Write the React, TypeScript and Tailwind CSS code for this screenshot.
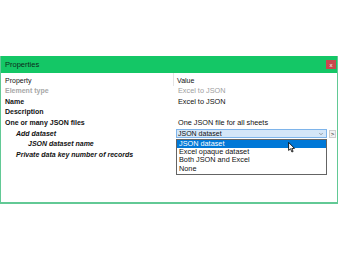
import { ChevronDown } from "lucide-react";

type Row = {
	label: string;
	labelClass: string;
	value?: string;
	valueClass?: string;
	select?: boolean;
};

const rows: Row[] = [
	{ label: "Element type", labelClass: "pl-[4px] font-bold text-[#a8a8a8]", value: "Excel to JSON", valueClass: "text-[#a0a0a0]" },
	{ label: "Name", labelClass: "pl-[4px] font-bold", value: "Excel to JSON" },
	{ label: "Description", labelClass: "pl-[4px] font-bold" },
	{ label: "One or many JSON files", labelClass: "pl-[4px] font-bold", value: "One JSON file for all sheets" },
	{ label: "Add dataset", labelClass: "pl-[15px] font-bold italic", select: true },
	{ label: "JSON dataset name", labelClass: "pl-[27px] font-bold italic" },
	{ label: "Private data key number of records", labelClass: "pl-[15px] font-bold italic" },
];

const options = ["JSON dataset", "Excel opaque dataset", "Both JSON and Excel", "None"];

function Cursor() {
	return (
		<svg width="8" height="11" viewBox="0 0 9 13" className="absolute left-[288px] top-[142px]">
			<path d="M0.5 0.5 L0.5 10 L2.8 8 L4.4 11.8 L5.8 11.2 L4.3 7.6 L7.5 7.6 Z" fill="#fff" stroke="#000" strokeWidth="1" strokeLinejoin="round" />
		</svg>
	);
}

export default function App() {
	return (
		<div className="relative h-[260px] w-[340px] overflow-hidden bg-white font-['Liberation_Sans',Arial,sans-serif] text-[7px] text-[#111]">
			<div className="h-[56px]" />
			{/* Window */}
			<div className="flex h-[148px] w-[338px] flex-col border-x-[1.5px] border-b-[2px] border-[#62c995]">
				{/* Title bar */}
				<div className="flex h-[17px] items-center justify-between bg-[#14c766] pl-[4px] pr-[1px]">
					<span className="text-[7.5px] text-[#0c2a1a]">Properties</span>
					<div className="flex h-[9px] w-[10px] items-center justify-center bg-[#c9484e] text-[6px] leading-none text-white">
						x
					</div>
				</div>

				{/* Grid */}
				<div className="flex flex-col">
					<div className="flex h-[13px] items-end">
						<div className="w-[172px] pl-[4px]">Property</div>
						<div className="h-full w-px bg-[#e4e4e4]" />
						<div className="pl-[3px]">Value</div>
					</div>
					{rows.map((r) => (
						<div key={r.label} className="flex h-[10.67px] items-center">
							<div className={`w-[173px] whitespace-nowrap ${r.labelClass}`}>{r.label}</div>
							{r.select ? (
								<div className="flex items-center gap-[2px] pl-[2px]">
									<div className="flex h-[9px] w-[151px] items-center justify-between border border-[#7eb4ea] bg-[#d4e6f8] pl-[1px] pr-[2px]">
										<span>JSON dataset</span>
										<ChevronDown size={6} strokeWidth={2} className="text-[#555]" />
									</div>
									<div className="flex h-[8px] w-[7px] items-center justify-center border border-[#cfcfcf] bg-[#f2f2f2] text-[6px] leading-none">
										&gt;
									</div>
								</div>
							) : (
								<div className={`pl-[4px] text-[7.3px] ${r.valueClass ?? ""}`}>{r.value}</div>
							)}
						</div>
					))}
				</div>
			</div>

			{/* Dropdown list */}
			<div className="absolute left-[176px] top-[139px] flex w-[151px] flex-col border border-[#646464] bg-white pb-[1px] text-[7.3px]">
				{options.map((o, i) => (
					<div
						key={o}
						className={`flex h-[8.3px] items-center pl-[2px] ${i === 0 ? "bg-[#0078d7] text-white" : ""}`}
					>
						{o}
					</div>
				))}
			</div>

			<Cursor />
		</div>
	);
}
